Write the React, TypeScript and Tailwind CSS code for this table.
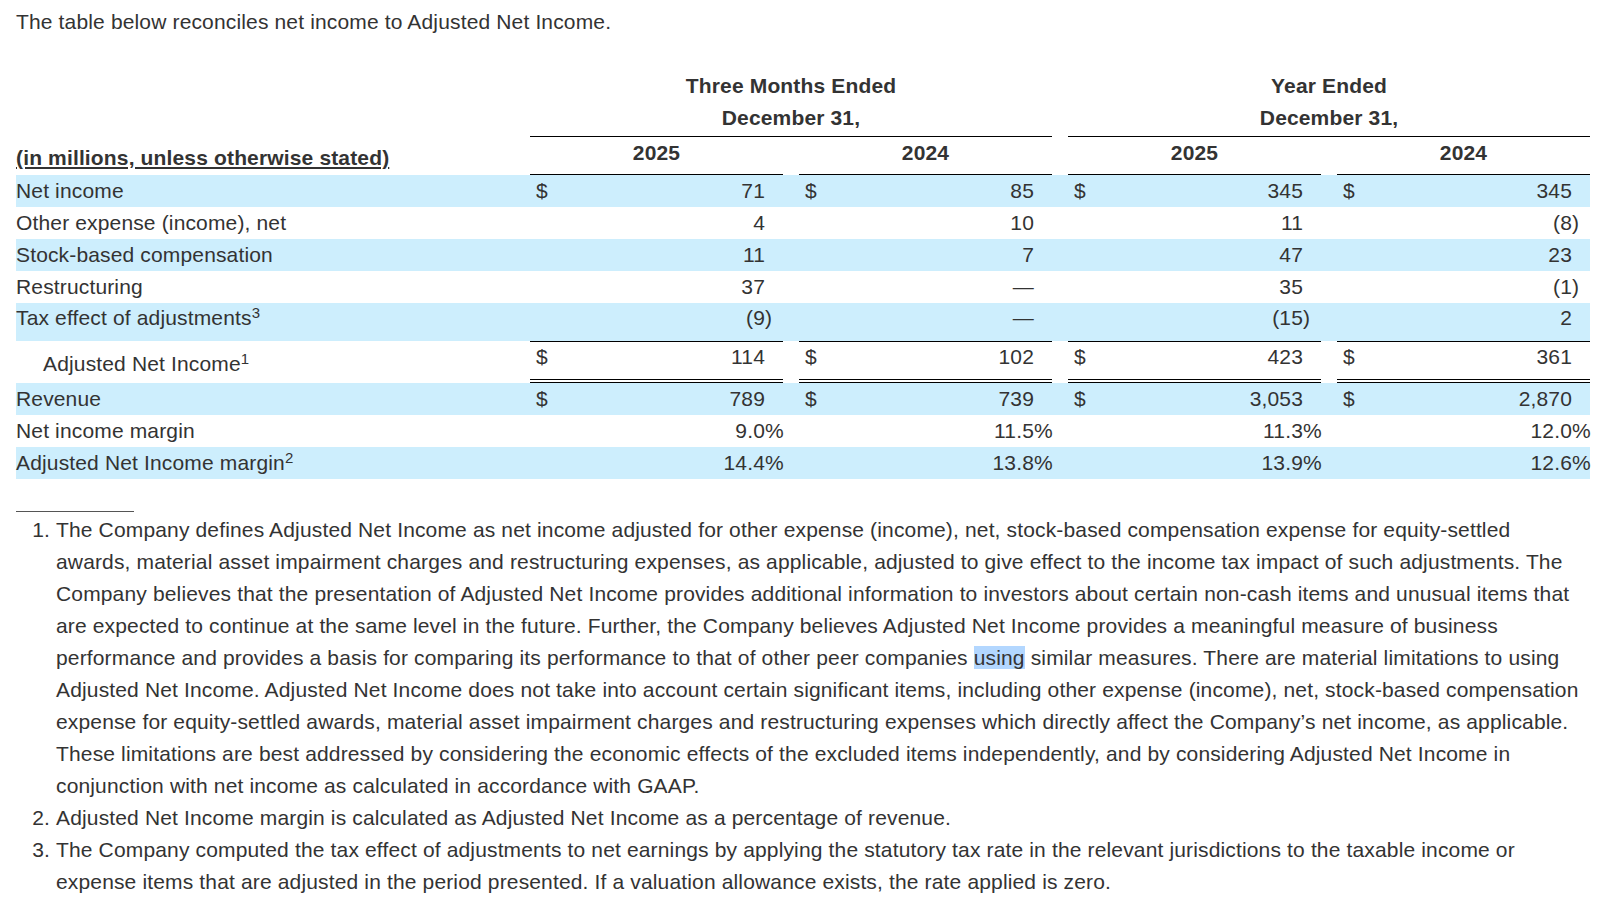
import React from "react"

type Row = {
  label: string
  sup?: string
  hl?: boolean
  dollar?: boolean
  total?: boolean
  tall?: boolean
  vals: string[]
}

const rows: Row[] = [
  { label: "Net income", hl: true, dollar: true, vals: ["71", "85", "345", "345"] },
  { label: "Other expense (income), net", vals: ["4", "10", "11", "(8)"] },
  { label: "Stock-based compensation", hl: true, vals: ["11", "7", "47", "23"] },
  { label: "Restructuring", vals: ["37", "—", "35", "(1)"] },
  { label: "Tax effect of adjustments", sup: "3", hl: true, tall: true, vals: ["(9)", "—", "(15)", "2"] },
  { label: "Adjusted Net Income", sup: "1", dollar: true, total: true, vals: ["114", "102", "423", "361"] },
  { label: "Revenue", hl: true, dollar: true, vals: ["789", "739", "3,053", "2,870"] },
  { label: "Net income margin", vals: ["9.0%", "11.5%", "11.3%", "12.0%"] },
  { label: "Adjusted Net Income margin", sup: "2", hl: true, vals: ["14.4%", "13.8%", "13.9%", "12.6%"] },
]

const Value = ({ v }: { v: string }) => {
  let main = v
  let suffix = ""
  if (v.endsWith(")") || v.endsWith("%")) {
    main = v.slice(0, -1)
    suffix = v.slice(-1)
  }
  return (
    <span className="flex justify-end">
      <span>{main}</span>
      <span className="w-[18px] text-left">{suffix}</span>
    </span>
  )
}

const Cell = ({ row, v }: { row: Row; v: string }) => {
  return (
    <td
      className={
        "w-[253px] pl-[6px] p-0 " +
        (row.total
          ? "align-top leading-[30px] border-t border-black border-b-4 border-double border-b-black"
          : row.tall
            ? "align-top leading-[30px]"
            : "align-middle leading-[32px]")
      }
    >
      <div className="flex justify-between">
        <span>{row.dollar ? "$" : ""}</span>
        <Value v={v} />
      </div>
    </td>
  )
}

const Gap = () => <td className="w-4 p-0" />

export default function App() {
  return (
    <div
      className="min-h-screen bg-white text-[#333] px-4 pt-[6px] pb-6 text-[21px] tracking-[0.15px]"
      style={{ fontFamily: '"Liberation Sans", Arial, Helvetica, sans-serif' }}
    >
      <p className="leading-[32px]">The table below reconciles net income to Adjusted Net Income.</p>

      <table className="mt-[32px] border-separate border-spacing-0 w-[1574px] table-fixed">
        <colgroup>
          <col className="w-[514px]" />
          <col className="w-[253px]" />
          <col className="w-4" />
          <col className="w-[253px]" />
          <col className="w-4" />
          <col className="w-[253px]" />
          <col className="w-4" />
          <col className="w-[253px]" />
        </colgroup>
        <thead className="font-bold">
          <tr className="h-[32px]">
            <th />
            <th colSpan={3} className="text-center align-bottom leading-[32px] font-bold">
              Three Months Ended
            </th>
            <th />
            <th colSpan={3} className="text-center align-bottom leading-[32px] font-bold">
              Year Ended
            </th>
          </tr>
          <tr className="h-[35px]">
            <th />
            <th colSpan={3} className="text-center align-top leading-[32px] font-bold border-b border-black">
              December 31,
            </th>
            <th />
            <th colSpan={3} className="text-center align-top leading-[32px] font-bold border-b border-black">
              December 31,
            </th>
          </tr>
          <tr className="h-[38px]">
            <th className="text-left align-bottom leading-[32px] pb-[1px] font-bold">
              <span className="underline underline-offset-2">(in millions, unless otherwise stated)</span>
            </th>
            <th className="text-center align-top leading-[32px] border-b border-black">2025</th>
            <th />
            <th className="text-center align-top leading-[32px] border-b border-black">2024</th>
            <th />
            <th className="text-center align-top leading-[32px] border-b border-black">2025</th>
            <th />
            <th className="text-center align-top leading-[32px] border-b border-black">2024</th>
          </tr>
        </thead>
        <tbody>
          {rows.map((row) => {
            const h = row.total ? "h-[42px]" : row.tall ? "h-[38px]" : "h-[32px]"
            return (
              <tr key={row.label} className={(row.hl ? "bg-[#cdeefd] " : "") + h}>
                <td
                  className={
                    "p-0 " +
                    (row.total
                      ? "align-bottom leading-[32px] pl-[27px] pb-[3px]"
                      : row.tall
                        ? "align-top leading-[30px]"
                        : "align-middle leading-[32px]")
                  }
                >
                  {row.label}
                  {row.sup && <sup className="text-[15px] -top-[0.45em]">{row.sup}</sup>}
                </td>
                <Cell row={row} v={row.vals[0]} />
                <Gap />
                <Cell row={row} v={row.vals[1]} />
                <Gap />
                <Cell row={row} v={row.vals[2]} />
                <Gap />
                <Cell row={row} v={row.vals[3]} />
              </tr>
            )
          })}
        </tbody>
      </table>

      <div className="mt-[32px] w-[118px] border-t border-[#555]" />

      <ol className="list-decimal pl-[40px] leading-[32px] pr-0 mt-[2px] max-w-[1574px]">
        <li>
          The Company defines Adjusted Net Income as net income adjusted for other expense (income), net,
          stock-based compensation expense for equity-settled awards, material asset impairment charges and
          restructuring expenses, as applicable, adjusted to give effect to the income tax impact of such
          adjustments. The Company believes that the presentation of Adjusted Net Income provides additional
          information to investors about certain non-cash items and unusual items that are expected to continue at
          the same level in the future. Further, the Company believes Adjusted Net Income provides a meaningful
          measure of business performance and provides a basis for comparing its performance to that of other peer
          companies <span className="bg-[#b3d7ff]">using</span> similar measures. There are material limitations
          to using Adjusted Net Income. Adjusted Net Income does not take into account certain significant items,
          including other expense (income), net, stock-based compensation expense for equity-settled awards,
          material asset impairment charges and restructuring expenses which directly affect the Company’s net
          income, as applicable. These limitations are best addressed by considering the economic effects of the
          excluded items independently, and by considering Adjusted Net Income in conjunction with net income as
          calculated in accordance with GAAP.
        </li>
        <li>Adjusted Net Income margin is calculated as Adjusted Net Income as a percentage of revenue.</li>
        <li>
          The Company computed the tax effect of adjustments to net earnings by applying the statutory tax rate in
          the relevant jurisdictions to the taxable income or expense items that are adjusted in the period
          presented. If a valuation allowance exists, the rate applied is zero.
        </li>
      </ol>
    </div>
  )
}
